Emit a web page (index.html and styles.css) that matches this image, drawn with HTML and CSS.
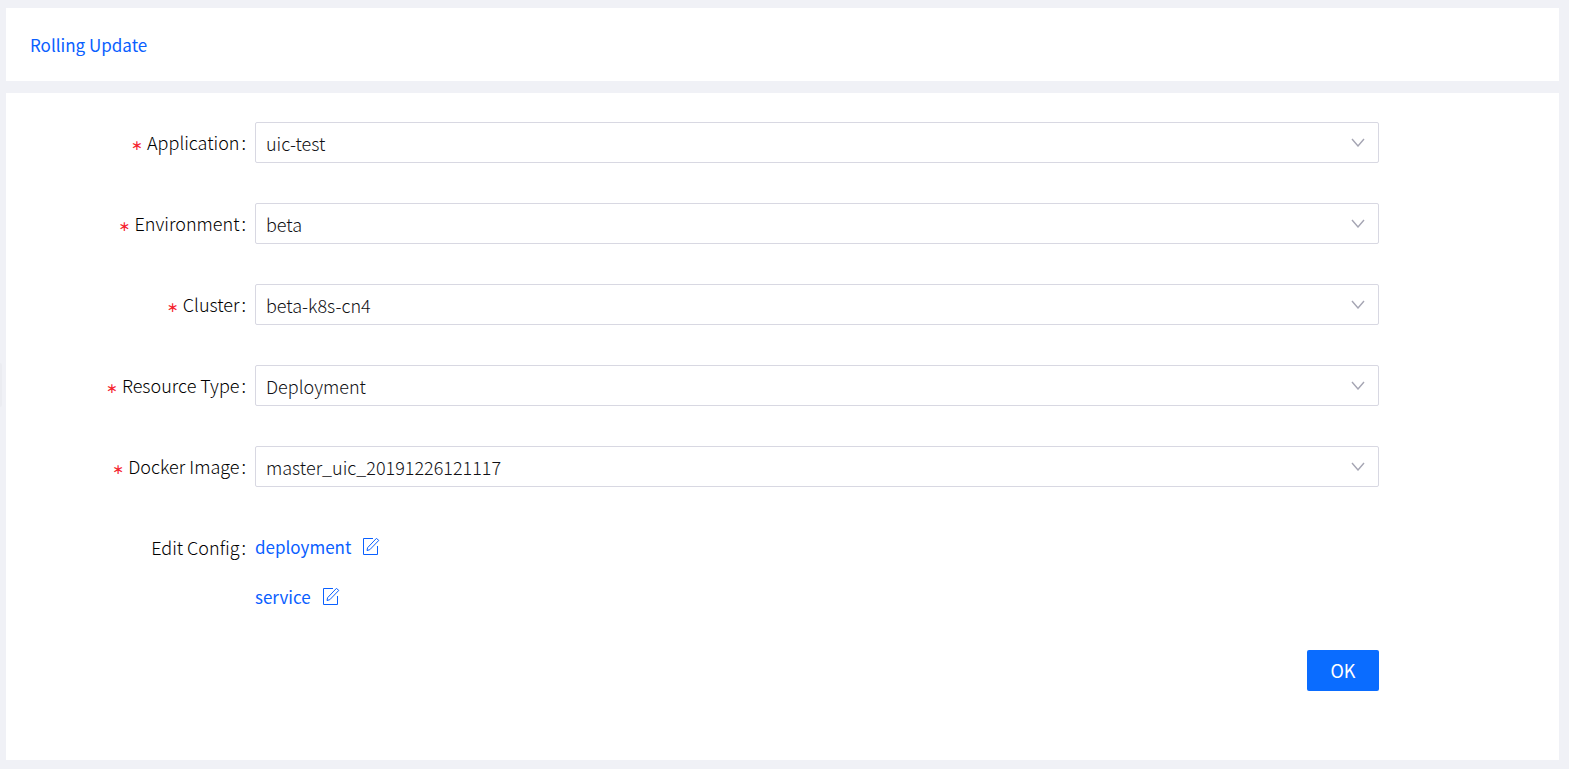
FILE: index.html
```html
<!DOCTYPE html>
<html lang="en">
<head>
  <meta charset="UTF-8">
  <meta name="viewport" content="width=device-width, initial-scale=1.0">
  <title>Rolling Update</title>
  <link rel="stylesheet" href="styles.css">
</head>
<body>
  <svg class="sprite" aria-hidden="true">
    <symbol id="icon-down" viewBox="0 0 14 9">
      <path d="M1 1 L7 8 L13 1" fill="none" stroke="currentColor" stroke-width="1.4"/>
    </symbol>
    <symbol id="icon-edit" viewBox="0 0 18 18">
      <path d="M11 1.5 H1.5 V17.5 H15.5 V9" fill="none" stroke="currentColor"/>
      <path d="M5 13.5 L5.6 10.7 L14.4 1.4 L16.8 3.4 L7.8 12.7 Z" fill="none" stroke="currentColor"/>
    </symbol>
  </svg>

  <button type="button" class="sider-toggle" aria-label="Toggle menu"></button>

  <header class="card page-header">
    <a href="#">Rolling Update</a>
  </header>

  <main class="card page-content">
    <form id="updateForm">
      <div class="form-item">
        <label class="required" for="application">Application</label>
        <div class="select-wrap">
          <select id="application" name="application">
            <option>uic-test</option>
          </select>
          <svg class="arrow"><use href="#icon-down"/></svg>
        </div>
      </div>
      <div class="form-item">
        <label class="required" for="environment">Environment</label>
        <div class="select-wrap">
          <select id="environment" name="environment">
            <option>beta</option>
          </select>
          <svg class="arrow"><use href="#icon-down"/></svg>
        </div>
      </div>
      <div class="form-item">
        <label class="required" for="cluster">Cluster</label>
        <div class="select-wrap">
          <select id="cluster" name="cluster">
            <option>beta-k8s-cn4</option>
          </select>
          <svg class="arrow"><use href="#icon-down"/></svg>
        </div>
      </div>
      <div class="form-item">
        <label class="required" for="resourceType">Resource Type</label>
        <div class="select-wrap">
          <select id="resourceType" name="resourceType">
            <option>Deployment</option>
          </select>
          <svg class="arrow"><use href="#icon-down"/></svg>
        </div>
      </div>
      <div class="form-item">
        <label class="required" for="dockerImage">Docker Image</label>
        <div class="select-wrap">
          <select id="dockerImage" name="dockerImage">
            <option>master_uic_20191226121117</option>
          </select>
          <svg class="arrow"><use href="#icon-down"/></svg>
        </div>
      </div>
      <div class="form-item">
        <span class="form-label">Edit Config</span>
        <div class="config-list">
          <a href="#">deployment <svg class="edit"><use href="#icon-edit"/></svg></a>
          <a href="#">service <svg class="edit"><use href="#icon-edit"/></svg></a>
        </div>
      </div>
      <div class="form-actions">
        <button type="submit" class="btn-primary">OK</button>
      </div>
    </form>
  </main>
</body>
</html>
```

FILE: styles.css
```css
* {
  box-sizing: border-box;
}

body {
  display: flex;
  flex-direction: column;
  gap: 12px;
  min-height: 100vh;
  margin: 0;
  padding: 8px 10px 9px 6px;
  background-color: #f0f1f6;
  color: #000;
  font-family: "Noto Sans CJK SC", "Noto Sans", sans-serif;
  font-size: 18px;
  font-weight: 300;
  line-height: 41px;
}

a {
  color: #0a60ff;
  font-size: 17px;
  font-weight: 400;
  text-decoration: none;
}

.sprite {
  display: none;
}

.card {
  background-color: #fff;
}

.page-header {
  padding: 16px 24px;
}

.page-content {
  flex: 1;
  padding: 29px 0;
}

/* collapsed side menu handle */
.sider-toggle {
  position: absolute;
  top: 363px;
  left: 0;
  width: 2px;
  height: 44px;
  padding: 0;
  border: none;
  border-radius: 0 2px 2px 0;
  background-color: #ebecf1;
}

form {
  display: flex;
  flex-direction: column;
  gap: 40px;
  padding-right: 180px;
}

.form-item {
  display: grid;
  grid-template-columns: 240px 1fr;
  column-gap: 9px;
}

label,
.form-label {
  text-align: right;
}

label::after,
.form-label::after {
  content: ":";
  margin-left: 2px;
}

.required::before {
  content: "∗";
  margin-right: 4px;
  color: #f5222d;
  font-family: "DejaVu Sans", sans-serif;
  font-size: 14px;
  font-weight: 400;
  line-height: 1;
}

.select-wrap {
  display: grid;
  align-items: center;
}

.select-wrap > * {
  grid-area: 1 / 1;
}

select {
  width: 100%;
  height: 41px;
  padding: 0 40px 0 10px;
  border: 1px solid #d8d8e2;
  border-radius: 2px;
  background-color: #fff;
  color: #101014;
  font: inherit;
  appearance: none;
  cursor: pointer;
}

.arrow {
  justify-self: end;
  width: 14px;
  height: 9px;
  margin-right: 14px;
  color: #a5a5b3;
  pointer-events: none;
}

.config-list {
  display: flex;
  flex-direction: column;
  align-items: flex-start;
  gap: 11px;
  line-height: 39px;
}

.config-list a {
  display: flex;
  align-items: center;
  gap: 11px;
}

.edit {
  width: 18px;
  height: 18px;
  margin-bottom: 2px;
}

.form-actions {
  display: flex;
  justify-content: flex-end;
  margin-top: -6px;
}

.btn-primary {
  width: 72px;
  height: 41px;
  padding: 0 0 2px;
  border: none;
  border-radius: 2px;
  background-color: #0a6cff;
  color: #fff;
  font: inherit;
  font-weight: 400;
  cursor: pointer;
}
```
